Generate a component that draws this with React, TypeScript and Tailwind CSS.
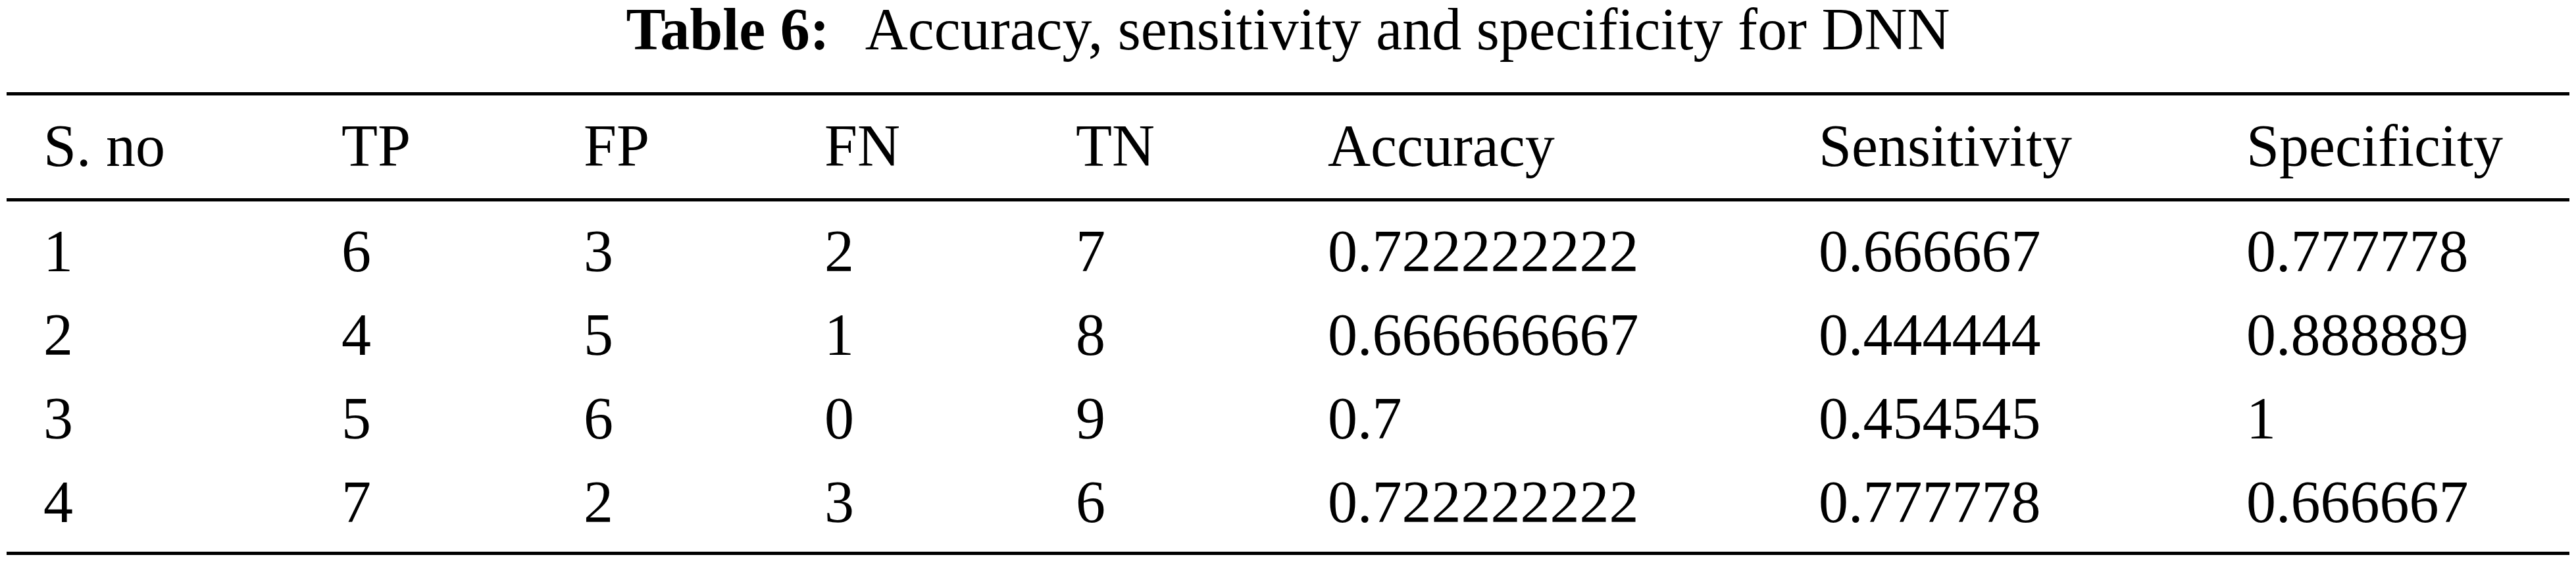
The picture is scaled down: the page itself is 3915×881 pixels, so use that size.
const headers = ['S. no', 'TP', 'FP', 'FN', 'TN', 'Accuracy', 'Sensitivity', 'Specificity'];

const rows = [
  ['1', '6', '3', '2', '7', '0.722222222', '0.666667', '0.777778'],
  ['2', '4', '5', '1', '8', '0.666666667', '0.444444', '0.888889'],
  ['3', '5', '6', '0', '9', '0.7', '0.454545', '1'],
  ['4', '7', '2', '3', '6', '0.722222222', '0.777778', '0.666667'],
];

const cols = 'grid grid-cols-[453px_368px_366px_382px_383px_746px_650px_1fr] pl-[56px]';

export default function App() {
  return (
    <div className="w-[3915px] h-[881px] bg-white text-black font-['Liberation_Serif','Times_New_Roman',serif] text-[90px] leading-[90px]">
      {/* caption */}
      <div className="flex justify-center whitespace-nowrap">
        <span className="font-bold">Table 6:</span>
        <span className="ml-[54px]">Accuracy, sensitivity and specificity for DNN</span>
      </div>

      <div className="mx-[10px] mt-[50px] border-t-[5px] border-b-[5px] border-black">
        <div className={`${cols} pt-[32px] pb-[34px] border-b-[5px] border-black`}>
          {headers.map((h) => (
            <div key={h} className="whitespace-nowrap">{h}</div>
          ))}
        </div>

        <div className="py-[12px]">
          {rows.map((r, i) => (
            <div key={i} className={`${cols} py-[18.5px]`}>
              {r.map((c, j) => (
                <div key={j} className="whitespace-nowrap">{c}</div>
              ))}
            </div>
          ))}
        </div>
      </div>
    </div>
  );
}
